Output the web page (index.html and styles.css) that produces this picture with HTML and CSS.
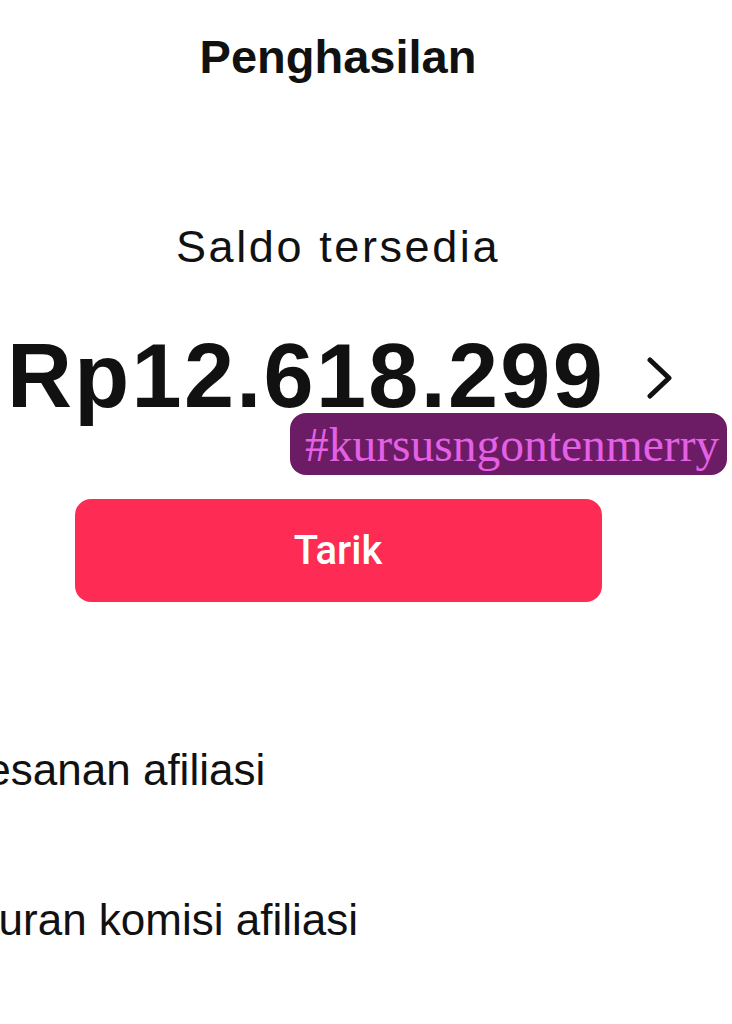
FILE: index.html
```html
<!DOCTYPE html>
<html lang="id">
<head>
    <meta charset="UTF-8">
    <meta name="viewport" content="width=device-width, initial-scale=1.0">
    <title>Penghasilan</title>
    <link rel="stylesheet" href="styles.css">
</head>
<body>

<div class="screen">
    <header class="topbar">
        <h1>Penghasilan</h1>
    </header>

    <section class="balance">
        <p class="balance-label">Saldo tersedia</p>
        <div class="balance-amount">
            <span>Rp12.618.299</span>
            <svg class="chevron" width="26" height="42" viewBox="0 0 26 42">
                <polyline points="3,3 22,21 3,39" fill="none" stroke="#111" stroke-width="5" stroke-linecap="round" stroke-linejoin="round"/>
            </svg>
        </div>
        <button class="withdraw">Tarik</button>
    </section>

    <ul class="menu">
        <li>Pesanan afiliasi</li>
        <li>Aturan komisi afiliasi</li>
    </ul>

    <span class="tag">#kursusngontenmerry</span>
</div>

</body>
</html>
```

FILE: styles.css
```css
body {
  margin: 0;
  background-color: #fff;
  font-family: "Liberation Sans", Arial, sans-serif;
  color: #111;
  overflow: hidden;
}

.screen {
    position: relative;
    width: 822px;
    margin-left: -73px;
}

.topbar {
    padding-top: 33px;
    text-align: center;
}
.topbar h1 {
    margin: 0;
    font-size: 47px;
    line-height: 47px;
    font-weight: bold;
}

.balance {
    display: flex;
    flex-direction: column;
    align-items: center;
}
.balance-label {
    margin: 144px 0 0;
    font-size: 45px;
    line-height: 45px;
    letter-spacing: 2.6px;
}
.balance-amount {
    display: flex;
    align-items: center;
    gap: 42px;
    margin-top: 62px;
    margin-left: 4px;
    height: 90px;
}
.balance-amount span {
    font-size: 90px;
    line-height: 90px;
    font-weight: bold;
    letter-spacing: 2.3px;
}
.chevron {
    display: block;
    margin-top: 4px;
}

.withdraw {
    margin-top: 78px;
    width: 527px;
    height: 103px;
    border: none;
    border-radius: 16px;
    background-color: #fe2c55;
    color: #fff;
    font-family: Roboto, "Liberation Sans", sans-serif;
    font-size: 40px;
    font-weight: 500;
    cursor: pointer;
}

.menu {
    list-style: none;
    margin: 146px 0 0;
    padding: 0 0 0 30px;
    display: flex;
    flex-direction: column;
    gap: 106px;
}
.menu li {
    font-size: 44px;
    line-height: 44px;
    white-space: nowrap;
}

.tag {
    position: absolute;
    left: 363px;
    top: 413px;
    width: 437px;
    height: 62px;
    box-sizing: border-box;
    padding-left: 15px;
    border-radius: 16px;
    background-color: #6c1c64;
    color: #e460e4;
    font-family: "Liberation Serif", "Times New Roman", serif;
    font-size: 47.5px;
    line-height: 64px;
    white-space: nowrap;
    overflow: hidden;
}
```
